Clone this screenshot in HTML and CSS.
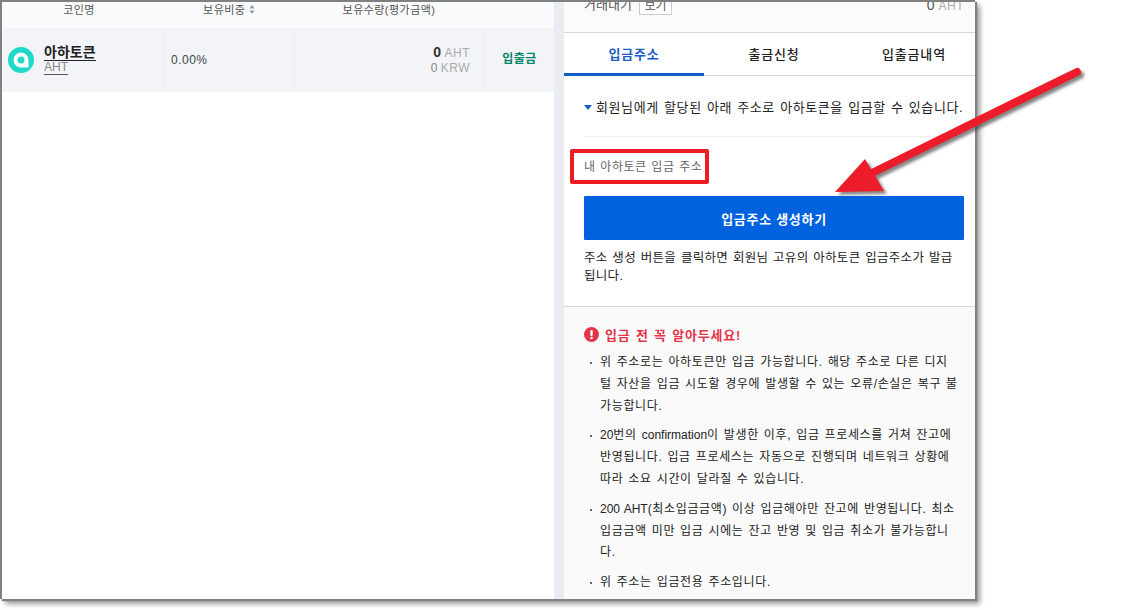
FILE: index.html
```html
<!DOCTYPE html>
<html lang="ko">
<head>
  <meta charset="UTF-8">
  <title>입금주소</title>
  <link rel="stylesheet" href="styles.css">
</head>
<body>
  <div class="frame">
    <div class="left-panel">
      <div class="coin-head">
        <div class="col-name">코인명</div>
        <div class="col-ratio">보유비중 <svg class="sort" width="6" height="9" viewBox="0 0 6 9"><path d="M3 0l2.6 3.4H.4zM3 9L.4 5.6h5.2z"/></svg></div>
        <div class="col-amount">보유수량(평가금액)</div>
      </div>
      <div class="coin-row">
        <div class="col-name name-cell">
          <svg class="coin-logo" width="26" height="26" viewBox="0 0 26 26">
            <circle cx="13" cy="13" r="13" fill="#1ed9c8"/>
            <path d="M13 5.5a7.5 7.5 0 1 0 0 15h7.5V13A7.5 7.5 0 0 0 13 5.5zm0 4a3.5 3.5 0 1 1 0 7 3.5 3.5 0 0 1 0-7z" fill="#fff"/>
          </svg>
          <div class="coin-title">
            <a class="coin-name">아하토큰</a>
            <a class="coin-code">AHT</a>
          </div>
        </div>
        <div class="col-ratio ratio-cell">0.00%</div>
        <div class="col-amount amount-cell">
          <div class="amount-main"><b>0</b> <span>AHT</span></div>
          <div class="amount-sub">0 <span>KRW</span></div>
        </div>
        <div class="col-action">입출금</div>
      </div>
    </div>

    <div class="right-panel">
      <div class="trade-row">
        <div class="trade-label">거래내기 <span class="view-btn">보기</span></div>
        <div class="trade-value">0 <span>AHT</span></div>
      </div>
      <div class="tabs">
        <div class="tab active">입금주소</div>
        <div class="tab">출금신청</div>
        <div class="tab">입출금내역</div>
      </div>
      <div class="deposit">
        <p class="intro"><span class="caret"></span>회원님에게 할당된 아래 주소로 아하토큰을 입금할 수 있습니다.</p>
        <div class="address-label">내 아하토큰 입금 주소</div>
        <button class="make-btn">입금주소 생성하기</button>
        <p class="help">주소 생성 버튼을 클릭하면 회원님 고유의 아하토큰 입금주소가 발급<br>됩니다.</p>
      </div>
      <div class="notice">
        <div class="notice-title">
          <svg width="15" height="15" viewBox="0 0 15 15"><circle cx="7.5" cy="7.5" r="7.5" fill="#e5354b"/><rect x="6.3" y="3" width="2.4" height="6" rx="1" fill="#fff"/><circle cx="7.5" cy="11" r="1.3" fill="#fff"/></svg>
          입금 전 꼭 알아두세요!
        </div>
        <ul class="notice-list">
          <li>위 주소로는 아하토큰만 입금 가능합니다. 해당 주소로 다른 디지<br>털 자산을 입금 시도할 경우에 발생할 수 있는 오류/손실은 복구 불<br>가능합니다.</li>
          <li><span class="latin">20</span>번의 <span class="latin">confirmation</span>이 발생한 이후, 입금 프로세스를 거쳐 잔고에<br>반영됩니다. 입금 프로세스는 자동으로 진행되며 네트워크 상황에<br>따라 소요 시간이 달라질 수 있습니다.</li>
          <li><span class="latin">200 AHT</span>(최소입금금액) 이상 입금해야만 잔고에 반영됩니다. 최소<br>입금금액 미만 입금 시에는 잔고 반영 및 입금 취소가 불가능합니<br>다.</li>
          <li>위 주소는 입금전용 주소입니다.</li>
        </ul>
      </div>
    </div>
  </div>

  <svg class="arrow" width="1122" height="610" viewBox="0 0 1122 610">
    <g class="arrow-shadow">
      <path d="M1077 72L870 174" stroke-width="8" stroke-linecap="round" fill="none"/>
      <path d="M835 192L865 159L884 191z"/>
    </g>
    <g class="arrow-body">
      <path d="M1077 72L870 174" stroke-width="8" stroke-linecap="round" fill="none"/>
      <path d="M835 192L865 159L884 191z"/>
    </g>
  </svg>
</body>
</html>
```

FILE: styles.css
```css
* {margin: 0; padding: 0; box-sizing: border-box;}
body {background-color: #fff; font-family: "Liberation Sans", "Noto Sans CJK KR", sans-serif; height: 610px; overflow: hidden; color: #222;}

.frame {width: 975px; height: 599px; display: flex; background-color: #e9ecf3; border-left: 2px solid #808080; border-top: 2px solid #808080; box-shadow: 2px 2px 1px #808080, 5px 5px 5px rgba(0,0,0,0.4); overflow: hidden;}
.left-panel {width: 552px; background-color: #fff;}
.right-panel {width: 411px; margin-left: 10px; background-color: #fff; display: flex; flex-direction: column; overflow: hidden;}

.coin-head {height: 26px; display: flex; background-color: #f9fafc; font-size: 11px; color: #555; line-height: 17px; letter-spacing: 0.45px;}
.coin-head > div {text-align: center;}
.coin-head .col-name {padding-right: 8px;}
.coin-row {height: 64px; display: flex; background-color: #f2f4f8;}
.col-name {width: 162px;}
.col-ratio {width: 130px;}
.col-amount {width: 190px;}
.col-action {width: 70px; border-left: 1px solid #ebedf1; text-align: center; font-size: 12px; font-weight: 700; color: #00836b; line-height: 62px; letter-spacing: 0.4px;}
.sort {fill: #9a9aa6;}

.name-cell {display: flex; align-items: center; padding-left: 6px; gap: 10px;}
.coin-title {display: flex; flex-direction: column; align-items: flex-start; margin-top: -1px;}
.coin-name {font-size: 14px; font-weight: 700; line-height: 15px; color: #222; border-bottom: 1px solid #222;}
.coin-code {font-size: 12px; line-height: 13px; color: #888; border-bottom: 1px solid #555;}
.ratio-cell {border-left: 1px solid #ebedf1; padding-left: 6px; font-size: 12px; line-height: 64px; color: #444; letter-spacing: 0.5px;}
.amount-cell {border-left: 1px solid #ebedf1; padding: 16px 14px 0 0; text-align: right; color: #888;}
.amount-main {font-size: 12px; line-height: 16px;}
.amount-main b {font-size: 14px; color: #333;}
.amount-main span, .amount-sub span {color: #aaa; letter-spacing: 0.5px;}
.amount-sub {font-size: 12px; line-height: 14px;}

.trade-row {height: 31px; flex: none; display: flex; justify-content: space-between; padding: 0 11px 0 20px; background-color: #fbfbfb; border-bottom: 1px solid #d8d8dc;}
.trade-label {font-size: 13px; line-height: 6px; color: #555;}
.view-btn {display: inline-block; border: 1px solid #ccc; padding: 0 4px; height: 21px; margin-top: -8px; margin-left: 4px; vertical-align: top; font-size: 12px; line-height: 22px; background-color: #fff;}
.trade-value {font-size: 14px; line-height: 6px; color: #555;}
.trade-value span {font-size: 12px; color: #aaa; letter-spacing: 0.5px;}

.tabs {display: flex; height: 43px; flex: none; border-bottom: 1px solid #d8d8dc;}
.tab {flex: 0 0 140px; text-align: center; font-size: 13px; font-weight: 500; line-height: 44px; color: #222; letter-spacing: 0.8px;}
.tab.active {color: #1a5dc8; font-weight: 700; border-bottom: 3px solid #115dcb; height: 43px;}

.deposit {padding: 0 11px 0 20px; height: 231px; flex: none; border-bottom: 1px solid #d8d8dc;}
.intro {height: 61px; padding-top: 21px; line-height: 22px; font-size: 13px; color: #222; border-bottom: 1px solid #eee; white-space: nowrap; letter-spacing: 0.6px; word-spacing: 1px;}
.caret {display: inline-block; width: 0; height: 0; border-left: 4px solid transparent; border-right: 4px solid transparent; border-top: 5px solid #115dcb; margin-right: 4px; vertical-align: 2px;}
.address-label {width: 139px; height: 35px; margin: 12px 0 12px -14px; padding-left: 10px; border: 4px solid #ed1c24; border-radius: 2px; font-size: 12px; line-height: 29px; color: #666; white-space: nowrap; letter-spacing: 0.5px; word-spacing: 1px;}
.make-btn {display: block; width: 380px; height: 44px; border: none; border-radius: 1px; background-color: #0062df; color: #fff; font-family: inherit; font-size: 13px; font-weight: 700; letter-spacing: 0.7px;}
.help {margin-top: 9px; font-size: 12.5px; line-height: 18px; color: #222; white-space: nowrap; letter-spacing: 0.3px; word-spacing: 1px;}

.notice {flex: 1; min-height: 0; background-color: #fafafb; padding: 19px 12px 0 20px;}
.notice-title {display: flex; align-items: center; gap: 6px; height: 17px; font-size: 13px; font-weight: 700; color: #e5354b; letter-spacing: 0.8px; word-spacing: 1px;}
.notice-list {list-style: none; margin-top: 9px;}
.notice-list li {position: relative; padding-left: 16px; margin-bottom: 8px; font-size: 12px; line-height: 21.8px; color: #222; white-space: nowrap; letter-spacing: 0.65px; word-spacing: 1px;}
.notice-list li::before {content: ""; position: absolute; left: 6px; top: 10px; width: 2px; height: 2px; background-color: #666;}
.latin {letter-spacing: 0;}

.arrow {position: absolute; top: 0; left: 0;}
.arrow-shadow {fill: #444; stroke: #444; opacity: 0.65; transform: translate(3px, 3px); filter: blur(1.5px);}
.arrow-body {fill: #ed1c2a; stroke: #ed1c2a;}
.arrow-body path:last-child, .arrow-shadow path:last-child {stroke: none;}
```
